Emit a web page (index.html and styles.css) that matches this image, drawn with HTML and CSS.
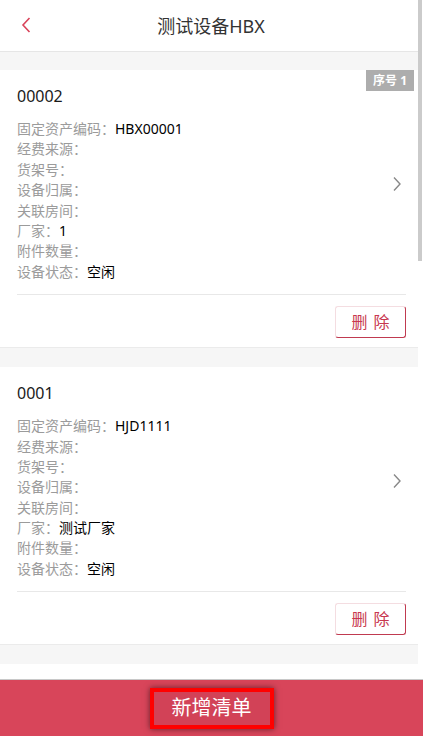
FILE: index.html
```html
<!DOCTYPE html>
<html lang="zh-CN">

<head>
    <meta charset="UTF-8">
    <title>测试设备HBX</title>
    <link rel="stylesheet" href="styles.css">
</head>

<body>
    <div class="page">
        <div class="main">
            <div class="scroll">
                <div class="header">
                    <button class="back" title="返回">
                        <svg width="12" height="18" viewBox="0 0 12 18">
                            <path d="M9.5 2 L3 9 L9.5 16" fill="none" stroke="#d9435a" stroke-width="1.6" />
                        </svg>
                    </button>
                    <h1>测试设备HBX</h1>
                </div>

                <div class="list">
                    <div class="card">
                        <span class="badge">序号 1</span>
                        <div class="card-main">
                            <div class="info">
                                <div class="card-no">00002</div>
                                <ul class="fields">
                                    <li><span class="label">固定资产编码：</span><span class="value">HBX00001</span></li>
                                    <li><span class="label">经费来源：</span></li>
                                    <li><span class="label">货架号：</span></li>
                                    <li><span class="label">设备归属：</span></li>
                                    <li><span class="label">关联房间：</span></li>
                                    <li><span class="label">厂家：</span><span class="value">1</span></li>
                                    <li><span class="label">附件数量：</span></li>
                                    <li><span class="label">设备状态：</span><span class="value">空闲</span></li>
                                </ul>
                            </div>
                            <svg class="arrow" width="10" height="16" viewBox="0 0 10 16">
                                <path d="M2 1.5 L8 8 L2 14.5" fill="none" stroke="#888" stroke-width="1.4" />
                            </svg>
                        </div>
                        <div class="card-actions">
                            <button class="btn-del">删 除</button>
                        </div>
                    </div>

                    <div class="card">
                        <div class="card-main">
                            <div class="info">
                                <div class="card-no">0001</div>
                                <ul class="fields">
                                    <li><span class="label">固定资产编码：</span><span class="value">HJD1111</span></li>
                                    <li><span class="label">经费来源：</span></li>
                                    <li><span class="label">货架号：</span></li>
                                    <li><span class="label">设备归属：</span></li>
                                    <li><span class="label">关联房间：</span></li>
                                    <li><span class="label">厂家：</span><span class="value">测试厂家</span></li>
                                    <li><span class="label">附件数量：</span></li>
                                    <li><span class="label">设备状态：</span><span class="value">空闲</span></li>
                                </ul>
                            </div>
                            <svg class="arrow" width="10" height="16" viewBox="0 0 10 16">
                                <path d="M2 1.5 L8 8 L2 14.5" fill="none" stroke="#888" stroke-width="1.4" />
                            </svg>
                        </div>
                        <div class="card-actions">
                            <button class="btn-del">删 除</button>
                        </div>
                    </div>

                    <div class="card card-next"></div>
                </div>
            </div>
            <div class="scrollbar">
                <div class="thumb"></div>
            </div>
        </div>

        <div class="footer">
            <button class="btn-add">新增清单</button>
        </div>
    </div>
</body>

</html>
```

FILE: styles.css
```css
* {
    box-sizing: border-box;
}

body {
    margin: 0;
    font-family: "Noto Sans", "Noto Sans CJK SC", sans-serif;
    color: #222;
    background-color: #fff;
}

.page {
    height: 736px;
    display: flex;
    flex-direction: column;
}

.main {
    flex: 1;
    display: flex;
    min-height: 0;
}

.scroll {
    flex: 1;
    overflow: hidden;
    background-color: #f6f6f6;
}

/* fake scrollbar, the list is longer than the window */
.scrollbar {
    width: 5px;
    flex-shrink: 0;
    background-color: #fff;
}

.thumb {
    width: 4px;
    height: 261px;
    background-color: #cbcbcb;
}

.header {
    height: 52px;
    display: flex;
    align-items: center;
    justify-content: center;
    position: relative;
    background-color: #fff;
    border-bottom: 1px solid #e6e6e6;
}

.header h1 {
    margin: 0;
    font-size: 18px;
    font-weight: normal;
    color: #333;
    line-height: 24px;
    padding-left: 4px;
}

.back {
    position: absolute;
    left: 20px;
    top: 16px;
    background: none;
    border: none;
    padding: 0;
    cursor: pointer;
}

.list {
    padding-top: 18px;
}

.card {
    position: relative;
    background-color: #fff;
    border-bottom: 1px solid #ebebeb;
    margin-bottom: 19px;
    padding: 15px 12px 0 17px;
}

.card-next {
    height: 40px;
    border-bottom: none;
}

.badge {
    position: absolute;
    top: 0;
    right: 4px;
    height: 21px;
    line-height: 21px;
    padding: 0 7px;
    background-color: #adadad;
    color: #fff;
    font-size: 12px;
    font-weight: bold;
}

.card-main {
    display: flex;
    align-items: center;
    padding-bottom: 12px;
}

.info {
    flex: 1;
}

.card-no {
    font-size: 16px;
    line-height: 22px;
    color: #1a1a1a;
}

.fields {
    list-style: none;
    margin: 12px 0 0;
    padding: 0;
    font-size: 14px;
    line-height: 20.4px;
}

.fields li {
    display: flex;
    height: 20.4px;
}

.label {
    color: #9b9b9b;
}

.value {
    color: #000;
}

.arrow {
    margin-right: 4px;
}

.card-actions {
    display: flex;
    justify-content: flex-end;
    border-top: 1px solid #e8e8e8;
    padding: 11px 0 9px;
}

.btn-del {
    width: 71px;
    height: 32px;
    background-color: #fff;
    border: 1px solid;
    border-color: #f4dde1 #c03a50 #c03a50 #f4dde1;
    border-radius: 3px;
    color: #c8374f;
    font-family: inherit;
    font-size: 16px;
    line-height: 20px;
    letter-spacing: 1px;
    padding: 0 0 0 1px;
    cursor: pointer;
}

.footer {
    height: 57px;
    flex-shrink: 0;
    display: flex;
    align-items: center;
    justify-content: center;
    background-color: #d8455a;
    border-top: 1px solid #c8c8c8;
}

.btn-add {
    width: 124px;
    height: 41px;
    border: 4px solid #ff0000;
    background-color: #d24257;
    box-shadow: 0 0 6px rgba(0, 0, 0, 0.55);
    color: #fff;
    font-family: inherit;
    font-size: 20px;
    line-height: 26px;
    padding: 0;
    cursor: pointer;
}
```
